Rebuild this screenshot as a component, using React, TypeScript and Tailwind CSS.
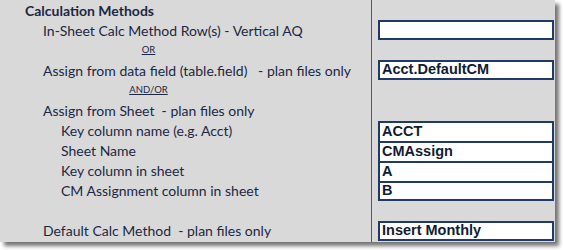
const labelFont = { fontFamily: "Lato, 'Open Sans', sans-serif" };

const Row = ({
  children,
  className = "",
}: {
  children?: React.ReactNode;
  className?: string;
}) => (
  <div className={`flex h-5 items-center pt-px whitespace-nowrap ${className}`}>
    {children}
  </div>
);

const Box = ({
  value = "",
  className = "border-2",
}: {
  value?: string;
  className?: string;
}) => (
  <div
    className={`flex h-5 items-center bg-white border-[#1f3a68] pl-[2px] font-bold text-[14.5px] text-[#111c33] ${className}`}
    style={{ fontFamily: "'Liberation Sans', Arial, sans-serif" }}
  >
    {value}
  </div>
);

export default function App() {
  return (
    <div className="w-[563px] h-[250px] bg-white">
      <div
        className="flex w-[555px] h-[242px] bg-[#d9d9d9] shadow-[4px_4px_4px_rgba(0,0,0,0.55)] text-[#1b2845]"
        style={labelFont}
      >
        {/* labels */}
        <div className="w-[371px] text-[14px]">
          <Row className="pl-[25px] font-bold">Calculation Methods</Row>
          <Row className="pl-[43px]">In-Sheet Calc Method Row(s) - Vertical AQ</Row>
          <Row className="w-[297px] justify-center text-[9.5px] underline">OR</Row>
          <Row className="pl-[43px]">
            Assign from data field (table.field)&nbsp;&nbsp;&nbsp;- plan files only
          </Row>
          <Row className="w-[297px] justify-center text-[9.5px] underline">AND/OR</Row>
          <Row className="pl-[43px]">Assign from Sheet&nbsp; - plan files only</Row>
          <Row className="pl-[61px]">Key column name (e.g. Acct)</Row>
          <Row className="pl-[61px]">Sheet Name</Row>
          <Row className="pl-[61px]">Key column in sheet</Row>
          <Row className="pl-[61px]">CM Assignment column in sheet</Row>
          <Row />
          <Row className="pl-[43px]">Default Calc Method&nbsp; - plan files only</Row>
        </div>

        {/* values */}
        <div className="flex-1 border-l border-[#5a5a5a] pl-[6px] pr-px">
          <div className="h-5" />
          <Box />
          <div className="h-5" />
          <Box value="Acct.DefaultCM" />
          <div className="h-10" />
          <div className="mt-px">
            <Box value="ACCT" className="border-x-2 border-t-2" />
            <Box value="CMAssign" className="border-x-2 border-t-2" />
            <Box value="A" className="border-x-2 border-t-2" />
            <Box value="B" className="border-2" />
          </div>
          <div className="h-5" />
          <Box value="Insert Monthly" />
        </div>
      </div>
    </div>
  );
}
